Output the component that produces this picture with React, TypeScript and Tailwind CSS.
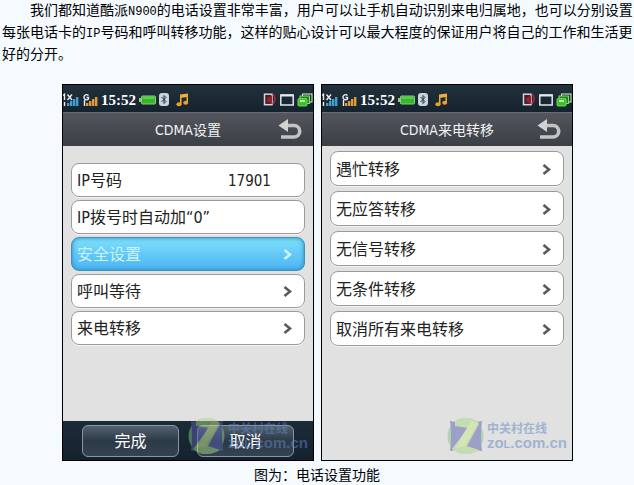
import type { ReactNode } from "react";

const SignalIcon = ({ color, children }: { color: string; children: ReactNode }) => (
  <svg width="16" height="14" viewBox="0 0 16 14" aria-hidden="true">
    <g fill={color}>
      <rect x="4" y="10" width="2.4" height="3" />
      <rect x="7" y="8" width="2.4" height="5" />
      <rect x="10" y="6" width="2.4" height="7" />
      <rect x="13" y="4" width="2.4" height="9" />
    </g>
    {children}
  </svg>
);

const StatusBar = () => {
  return (
    <div className="flex h-[27px] items-center justify-between bg-linear-to-b from-[#22313d] to-[#15232e] pt-0.5 text-white">
      <div className="flex items-center gap-[3px]">
        <SignalIcon color="#3f9fd0">
          <path d="M0 2.5 L1.5 1.3 V7 M4.5 1.5 L9 7 M9 1.5 L4.5 7 M1.5 9 V13" stroke="#e8eef2" strokeWidth="1.4" fill="none" />
        </SignalIcon>
        <SignalIcon color="#e09a3c">
          <path d="M6.5 2.5 A2.6 2.6 0 1 0 6.5 6 V4.5 H4.5 M2.5 7 V13" stroke="#e8eef2" strokeWidth="1.4" fill="none" />
        </SignalIcon>
        <span className="font-['Liberation_Serif',serif] text-[15px] leading-5 font-bold">15:52</span>
        <svg width="17" height="10" viewBox="0 0 17 10" aria-hidden="true">
          <rect x="2.5" y="1" width="14" height="8" rx="1" fill="#35b827" stroke="#8fc987" />
          <rect x="0" y="3" width="2" height="4" fill="#8fc987" />
          <path d="M4 3 H15" stroke="#7be566" />
        </svg>
        <svg width="10" height="13" viewBox="0 0 10 13" aria-hidden="true">
          <rect width="10" height="13" rx="3" fill="#c9d4dc" />
          <path d="M2.5 4 L7 8.5 L5 10.5 V2.5 L7 4.5 L2.5 9" stroke="#273642" fill="none" />
        </svg>
        <svg className="ml-1" width="13" height="14" viewBox="0 0 13 14" aria-hidden="true">
          <path d="M4 1.5 L12 0.5 V4 L5.5 4.8 V11 H4 Z M10.5 3 H12 V9.5 H10.5 Z" fill="#efb03a" />
          <ellipse cx="3" cy="11.2" rx="2.6" ry="2" fill="#e5a02f" />
          <ellipse cx="9.7" cy="9.7" rx="2.5" ry="2" fill="#e5a02f" />
        </svg>
      </div>
      <div className="flex items-center gap-[3px]">
        <svg width="14" height="13" viewBox="0 0 14 13" aria-hidden="true">
          <rect x="1.5" y="1.2" width="7.5" height="10.5" fill="#4c1d27" stroke="#d8d3d5" strokeWidth="1.5" />
          <path d="M4 5 L9 2.5 V11 L4 8.5 Z" fill="#8d2430" />
          <path d="M10 1 Q14 5.5 10 11" stroke="#a82935" strokeWidth="1.6" fill="none" />
        </svg>
        <svg width="14" height="12" viewBox="0 0 14 12" aria-hidden="true">
          <rect x="0.8" y="1" width="12.4" height="10" fill="#1a2833" stroke="#e4e8ea" strokeWidth="1.5" />
          <path d="M1 1.5 H13" stroke="#e4e8ea" strokeWidth="2" />
        </svg>
        <svg width="16" height="14" viewBox="0 0 16 14" aria-hidden="true">
          <rect x="5.5" y="1" width="9.5" height="8" fill="#1d3a26" stroke="#e0efe0" />
          <rect x="3" y="3" width="9.5" height="7.5" fill="#2b7a26" stroke="#7ee565" />
          <rect x="1" y="5.5" width="9" height="7.5" rx="1" fill="#41bd31" stroke="#63dc4e" />
          <path d="M3 8 H8" stroke="#e8ffe0" strokeWidth="1.4" />
        </svg>
      </div>
    </div>
  );
};

const TitleBar = ({ title }: { title: string }) => {
  return (
    <div className="grid h-[34px] grid-cols-[1fr_auto_1fr] items-center border-t border-[#6a6e73] bg-linear-to-b from-[#53575d] to-[#3a3e45] px-[11px]">
      <h2 className="col-start-2 text-sm text-[#f2f2f2]">{title}</h2>
      <button type="button" aria-label="返回" className="justify-self-end">
        <svg width="24" height="22" viewBox="0 0 24 22" aria-hidden="true">
          <path d="M7 6.5 H16 A5.75 5.75 0 0 1 16 18 H3" stroke="#c4c4c4" strokeWidth="3.6" fill="none" />
          <path d="M10 0 V13 L0.5 6.5 Z" fill="#d2d2d2" />
        </svg>
      </button>
    </div>
  );
};

const Chevron = () => (
  <svg width="9" height="12" viewBox="0 0 9 12" aria-hidden="true">
    <path d="M1.5 1 L7 5.5 L1.5 10" stroke="currentColor" strokeWidth="2.6" fill="none" />
  </svg>
);

const Watermark = () => {
  return (
    <div className="pointer-events-none absolute right-[5px] bottom-[5px] flex items-center gap-[3px] opacity-50">
      <svg width="37" height="38" viewBox="0 0 37 38" aria-hidden="true">
        <circle cx="18.5" cy="19" r="18" fill="#84c984" />
        <path d="M3 4 Q18 7 35 4 Q33 19 35 34 Q18 31 3 34 Q5 19 3 4 Z" fill="#5a5fae" />
        <path d="M8 5 Q12 1 19 1 Q27 1 31 5 L32 7 L20 29 L32 33 Q26 37 18 37 Q10 37 5 32 L21 11 L8 9 Z" fill="#a9d982" />
        <path d="M24 4 L31 6 L18 29 L8 31 Z" fill="#cce58c" />
      </svg>
      <div className="text-[#5f86c4]">
        <p className="text-xs leading-[14px] font-bold">中关村在线</p>
        <p className="font-['Liberation_Sans',sans-serif] text-[15px] leading-[14px] font-bold">
          zo<span className="text-[11px]">L</span>.com.cn
        </p>
      </div>
    </div>
  );
};

const rowBase = "flex w-full items-center justify-between rounded-lg border pt-0.5 pl-[5px] pr-3 text-base leading-5";
const rowPlain = "border-[#9b9b9b] bg-white text-[#222] shadow-[0_1px_0_#f4f4f4] [&_svg]:text-[#58595d]";
const rowActive =
  "border-[#4590b5] bg-linear-to-b from-[#7ddffb] to-[#4cb4f2] text-[#c8f3fb] shadow-[inset_0_0_4px_#2a86bd]";

const Phone = ({ title, children }: { title: string; children: ReactNode }) => {
  return (
    <section className="relative flex min-h-[377px] w-[252px] flex-col border border-black bg-[#e1e1e1]">
      <StatusBar />
      <TitleBar title={title} />
      {children}
      <Watermark />
    </section>
  );
};

const forwardRows = ["遇忙转移", "无应答转移", "无信号转移", "无条件转移", "取消所有来电转移"];
const footerButton =
  "h-8 flex-1 rounded-md border border-[#8996a2] bg-linear-to-b from-[#54616e] via-[#2c3a48] to-[#344352] pt-0.5 text-base leading-5 text-white";

export default function App() {
  return (
    <main className="flex min-h-screen flex-col bg-[#f5faff] font-['DejaVu_Sans_Condensed','Noto_Sans_CJK_SC',sans-serif] text-black">
      <p className="-mt-0.5 pl-0.5 indent-7 font-['Noto_Sans_CJK_SC',sans-serif] text-sm leading-[22px]">
        我们都知道酷派<span className="font-['Liberation_Mono',monospace] text-xs">N900</span>
        的电话设置非常丰富，用户可以让手机自动识别来电归属地，也可以分别设置每张电话卡的
        <span className="font-['Liberation_Mono',monospace] text-xs">IP</span>
        号码和呼叫转移功能，这样的贴心设计可以最大程度的保证用户将自己的工作和生活更好的分开。
      </p>
      <div className="mt-5 flex justify-center gap-[7px] pl-px">
        <Phone title="CDMA设置">
          <div className="flex flex-1 flex-col gap-[3px] px-2 pt-[17px]">
            <div className={`${rowBase} ${rowPlain} h-[34px]`}>
              <label htmlFor="ip">IP号码</label>
              <input id="ip" defaultValue="17901" className="w-16 bg-transparent text-[15px] outline-none" />
            </div>
            <button type="button" className={`${rowBase} ${rowPlain} h-[34px]`}>
              IP拨号时自动加“0”
            </button>
            <button type="button" className={`${rowBase} ${rowActive} h-[34px]`}>
              安全设置
              <Chevron />
            </button>
            <button type="button" className={`${rowBase} ${rowPlain} h-[34px]`}>
              呼叫等待
              <Chevron />
            </button>
            <button type="button" className={`${rowBase} ${rowPlain} h-[34px]`}>
              来电转移
              <Chevron />
            </button>
          </div>
          <div className="flex h-[39px] items-center gap-[18px] bg-linear-to-b from-[#1c2b38] to-[#15222e] px-[19px]">
            <button type="button" className={footerButton}>
              完成
            </button>
            <button type="button" className={footerButton}>
              取消
            </button>
          </div>
        </Phone>
        <Phone title="CDMA来电转移">
          <div className="flex flex-col gap-[5px] px-2 pt-[5px]">
            {forwardRows.map((label) => (
              <button key={label} type="button" className={`${rowBase} ${rowPlain} h-[35px]`}>
                {label}
                <Chevron />
              </button>
            ))}
          </div>
        </Phone>
      </div>
      <p className="mt-1 text-center text-sm leading-5">图为：电话设置功能</p>
    </main>
  );
}
